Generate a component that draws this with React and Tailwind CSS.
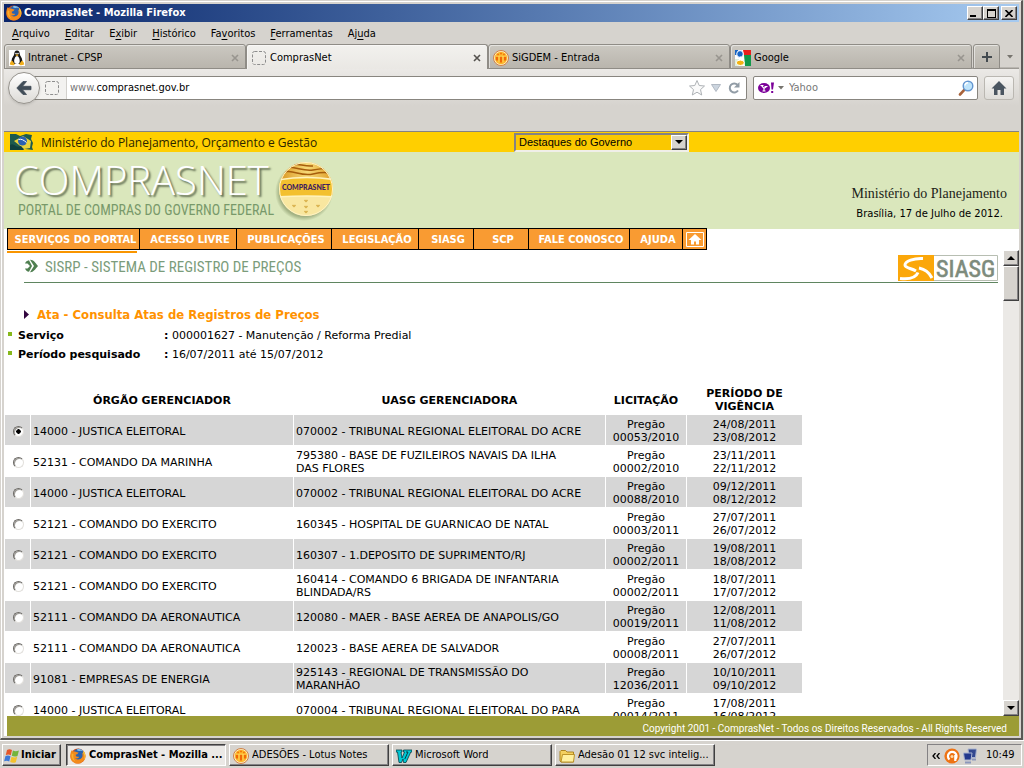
import React from "react";

const UI = "font-['DejaVu_Sans_Condensed','DejaVu_Sans',sans-serif]";
const RAISED =
  "border border-t-white border-l-white border-r-[#404040] border-b-[#404040] bg-[#d6d3ce] shadow-[inset_-1px_-1px_0_#848284]";

function FirefoxIcon() {
  return (
    <svg viewBox="0 0 16 16" className="size-4 shrink-0" aria-hidden="true">
      <circle cx="8" cy="8" r="7.6" fill="#d9541a" />
      <circle cx="8.6" cy="6.4" r="5.6" fill="#2b62ae" />
      <path d="M7 1.2c2.5-.8 5.4.3 6.6 2.3-1.6-.9-2.6-.8-3.8-.4L7.500 2.800z" fill="#7fc0ea" />
      <path d="M1.600 2.200 3.500 3.600C4.600 3.200 6 3.400 7 4.200L8.600 4.400 7.500 6l-1.800.8.300 1.500c.8.600 2.300.2 3.200.7-.6 1.500-2.800 1.700-4 1 1.600 2.300 5.300 2 6.800-.4.9-1.700.7-3.800-.2-5.100 3 1.500 3.700 5 2.200 7.600-2.600 4.400-9.400 4.700-12.500.5C-.3 9.400.2 4.900 1.600 2.200z" fill="#f28a1c" />
      <path d="M13.300 2.700c2.700 3 3 7.300.2 10.300 1.200-2.500 1.400-5.600-.5-7.700z" fill="#fcc431" />
      <path d="M1.800 5.500C1 9 2.600 12.300 5.500 13.600 3.700 11.500 2.900 8.500 3.400 6z" fill="#fbb02a" />
    </svg>
  );
}

function TuxIcon() {
  return (
    <svg viewBox="0 0 16 16" className="size-4 shrink-0 bg-white" aria-hidden="true">
      <path d="M8 .6c1.900 0 2.700 1.400 2.700 3.200 0 1.800 2.500 3.700 2.700 7.200L11 14H5L2.500 11c.2-3.500 2.800-5.300 2.800-7.200C5.300 2 6.100.6 8 .6z" fill="#161616" />
      <path d="M8 6c1.500 0 3 2.900 2.700 5.500C10.500 13.400 9.500 14 8 14s-2.700-.7-2.800-2.500C5 9 6.500 6 8 6z" fill="#fff" />
      <circle cx="7" cy="3.600" r=".8" fill="#fff" />
      <circle cx="9" cy="3.600" r=".8" fill="#fff" />
      <path d="M6.400 5 8 4.300 9.600 5 8 6.200z" fill="#f0ae1c" />
      <path d="M3 10.500 5.800 14c-.4 1.600-2.400 1.500-5 .4C1 13 1.200 12 3 10.500zM13 10.500 10.200 14c.4 1.600 2.400 1.500 5 .4C15 13 14.800 12 13 10.500z" fill="#f0ae1c" />
    </svg>
  );
}

function LotusIcon() {
  return (
    <svg viewBox="0 0 16 16" className="size-4 shrink-0" aria-hidden="true">
      <circle cx="8" cy="8" r="7.500" fill="#fff0c4" stroke="#cf8048" />
      <circle cx="8" cy="8" r="6.200" fill="#fdb62a" />
      <path d="M4 6.500v4M8 6.500v6M12 6.500v4" stroke="#f06a08" strokeWidth="2.200" />
      <path d="M6 6v6.500M10 6v6.500M2.500 6.200h11" stroke="#ffd860" strokeWidth=".8" />
      <path d="M4.300 4.500h1.500M7.200 3.500h1.600M10.200 4.500h1.500" stroke="#f06a08" strokeWidth="1.500" />
    </svg>
  );
}

function GoogleIcon() {
  return (
    <svg viewBox="0 0 16 16" className="size-4 shrink-0" aria-hidden="true">
      <path d="M0 0h16v16H0z" fill="#fff" />
      <path d="M8 0h8v5H9z" fill="#e9211d" />
      <path d="M0 0h3v5H0z" fill="#1765c5" />
      <path d="M9 5h7v11H10z" fill="#12994a" />
      <path d="M0 9h4v7H0z" fill="#dbeedd" />
      <ellipse cx="5" cy="4" rx="3.300" ry="3.400" fill="#1765c5" stroke="#fff" />
      <path d="M6 7c-1.500 1 1.500 1.500 2.500 3.500" stroke="#fff" strokeWidth="2" fill="none" />
      <ellipse cx="5.300" cy="12.800" rx="4" ry="2.700" fill="#f2b211" stroke="#fff" />
    </svg>
  );
}

function BlankIcon() {
  return (
    <svg viewBox="0 0 16 16" className="size-4 shrink-0" aria-hidden="true">
      <rect x="1.500" y="1.500" width="13" height="13" rx="2" fill="none" stroke="#8d8d8d" strokeDasharray="3 1.500" />
    </svg>
  );
}

function WordIcon() {
  return (
    <svg viewBox="0 0 16 16" className="size-4 shrink-0" aria-hidden="true">
      <path d="M0 2h6v2H5l1 6 2.500-6H7.500V2H16v2h-1.200L10 14.500H7.500L7 11l-1.500 3.500H3L1.500 4H0z" fill="#00c8d4" stroke="#053c46" strokeWidth=".8" />
      <path d="M10 4h2L8.800 11" fill="none" stroke="#053c46" />
    </svg>
  );
}

function FolderIcon() {
  return (
    <svg viewBox="0 0 16 16" className="size-4 shrink-0" aria-hidden="true">
      <path d="M1 3.500 2 2.500h4.500L8 4h6.500v10H2L1 13z" fill="#f3d060" stroke="#a87d13" strokeWidth=".9" />
      <path d="M3.500 6.500h12L14.500 14H2z" fill="#fff0a0" stroke="#b58b1e" strokeWidth=".9" />
    </svg>
  );
}

function WindowsIcon() {
  return (
    <svg viewBox="0 0 16 16" className="size-4 shrink-0" aria-hidden="true">
      <path d="M3 2c1.800-1 3.300-.9 5 .1L6.800 7.300c-1.600-1-3.200-1-5-.2z" fill="#e4572a" />
      <path d="M8.900 2.500c1.800 1 3.500 1 6 .1L13.500 8c-1.900.9-3.800.8-5.700-.2z" fill="#74b43c" />
      <path d="M1.500 8c1.800-.9 3.400-.8 5 .2l-1.300 5.200c-1.700-1-3.300-1-5.100-.1z" fill="#3d79d8" />
      <path d="M7.500 8.700c1.900 1 3.800 1 5.700.1l-1.400 5.400c-1.900.9-3.700.8-5.600-.2z" fill="#f3c22c" />
    </svg>
  );
}

const tabs = [
  { title: "Intranet - CPSP", Icon: TuxIcon },
  { title: "ComprasNet", Icon: BlankIcon, active: true },
  { title: "SiGDEM - Entrada", Icon: LotusIcon },
  { title: "Google", Icon: GoogleIcon },
];

function Tab({ title, Icon, active }) {
  return (
    <div
      className={
        "flex min-w-0 flex-[242_1_0] items-center rounded-t-[3px] border border-[#8f8c86] pt-[2px] pr-1 pl-1 shadow-[inset_1px_1px_0_#ffffff80] " +
        (active ? "border-b-0 bg-linear-to-b from-[#f2f1ee] to-[#eae8e4]" : "bg-linear-to-b from-[#cbc8c1] to-[#b9b5ad]")
      }
    >
      <button className="flex min-w-0 flex-1 items-center gap-[3px] text-left">
        <Icon />
        <span className="truncate">{title}</span>
      </button>
      <button aria-label={"Fechar " + title} className="p-[2px]">
        <svg viewBox="0 0 8 8" className="size-2">
          <path d="M1 1l6 6M7 1L1 7" stroke={active ? "#55524e" : "#98958f"} strokeWidth="1.600" />
        </svg>
      </button>
    </div>
  );
}

const menus = [
  ["", "A", "rquivo"],
  ["", "E", "ditar"],
  ["E", "x", "ibir"],
  ["", "H", "istórico"],
  ["Fa", "v", "oritos"],
  ["", "F", "erramentas"],
  ["Aj", "u", "da"],
];

function BrowserChrome() {
  return (
    <header className={UI + " text-[11px] leading-[14px] text-black"}>
      <div className="flex h-[18px] items-center bg-linear-to-r from-[#0a246a] to-[#a6caf0] pr-[2px] pl-[2px]">
        <FirefoxIcon />
        <h1 className="flex-1 truncate pl-[2px] font-bold text-white">ComprasNet - Mozilla Firefox</h1>
        <button aria-label="Minimizar" className={RAISED + " flex h-[14px] w-4 items-end justify-center pb-[2px]"}>
          <span className="mr-1 h-[2px] w-[6px] bg-black" />
        </button>
        <button aria-label="Maximizar" className={RAISED + " flex h-[14px] w-4 items-center justify-center"}>
          <span className="h-[9px] w-[9px] border border-t-2 border-black" />
        </button>
        <button aria-label="Fechar" className={RAISED + " ml-[2px] flex h-[14px] w-4 items-center justify-center"}>
          <svg viewBox="0 0 8 7" className="h-[7px] w-2">
            <path d="M.5 0l7 7M7.500 0l-7 7" stroke="#000" strokeWidth="1.600" />
          </svg>
        </button>
      </div>

      <nav className="flex h-[22px] items-center gap-[15px] pt-px pl-2">
        {menus.map(([a, b, c]) => (
          <button key={a + b + c}>
            {a}
            <span className="underline underline-offset-2">{b}</span>
            {c}
          </button>
        ))}
      </nav>

      <div className="flex h-[25px] bg-linear-to-b from-[#d6d3ce] from-90% to-[#8f8c86]">
        {tabs.map((tab) => (
          <Tab key={tab.title} {...tab} />
        ))}
        <button aria-label="Nova aba" className="ml-px flex w-[27px] items-center justify-center rounded-t-[3px] border border-[#8f8c86] bg-linear-to-b from-[#cbc8c1] to-[#b9b5ad] shadow-[inset_1px_1px_0_#ffffff80]">
          <svg viewBox="0 0 10 10" className="size-[10px]">
            <path d="M5 0v10M0 5h10" stroke="#444b50" strokeWidth="2" />
          </svg>
        </button>
        <button aria-label="Listar abas" className="flex w-[19px] items-center justify-center">
          <svg viewBox="0 0 6 4" className="h-1 w-[6px]">
            <path d="M0 0h6L3 3.500z" fill="#77746e" />
          </svg>
        </button>
      </div>

      <div className="flex h-[37px] items-center bg-linear-to-b from-[#ebe9e6] to-[#d6d3ce] pr-[5px] pl-1">
        <button aria-label="Voltar" className="z-10 flex size-8 shrink-0 items-center justify-center rounded-full border border-[#96938d] bg-linear-to-b from-white to-[#dddbd7] shadow-sm">
          <svg viewBox="0 0 16 14" className="h-[14px] w-4">
            <path d="M7 .5h3.500L6.500 5.300H15v3.400H6.500l4 4.800H7L.8 7z" fill="#414d58" stroke="#414d58" strokeLinejoin="round" strokeWidth=".8" />
          </svg>
        </button>
        <div className="-ml-2 flex h-6 flex-1 items-center rounded-[2px] border border-[#88857f] bg-white pr-1">
          <span className="flex h-full w-[34px] items-center border-r border-[#d2d0cc] bg-[#f3f2f0] pl-[11px]">
            <BlankIcon />
          </span>
          <label className="relative flex h-full flex-1 items-center">
            <input aria-label="Endereço" defaultValue="www.comprasnet.gov.br" className="absolute inset-0 w-full bg-transparent px-[3px] text-transparent outline-none" />
            <span className="pointer-events-none px-[3px] text-black">
              <span className="text-[#777]">www.</span>comprasnet.gov.br
            </span>
          </label>
          <button aria-label="Favorito">
            <svg viewBox="0 0 18 18" className="size-[18px]">
              <path d="M9 1.500l2.200 5 5.300.5-4 3.600 1.200 5.400L9 13.200 4.300 16l1.200-5.400-4-3.600 5.300-.5z" fill="#fafafa" stroke="#aeb2b6" />
            </svg>
          </button>
          <button aria-label="Histórico" className="px-[5px]">
            <svg viewBox="0 0 10 8" className="h-2 w-[10px]">
              <path d="M.5.5h9L5 7.500z" fill="#ccd5df" stroke="#b1b9c3" />
            </svg>
          </button>
          <button aria-label="Recarregar" className="px-px">
            <svg viewBox="0 0 14 14" className="size-[14px]">
              <path d="M10.500 3.800A4.500 4.500 0 1 0 11 9.500" fill="none" stroke="#919ca6" strokeWidth="2" />
              <path d="M12.500 1v5.500H7z" fill="#919ca6" />
            </svg>
          </button>
        </div>
        <div className="ml-[6px] flex h-6 w-[225px] items-center rounded-[2px] border border-[#88857f] bg-white pr-[3px] pl-1">
          <svg viewBox="0 0 16 12" className="h-3 w-4" role="img" aria-label="Yahoo">
            <ellipse cx="6" cy="6" rx="6" ry="5" fill="#7b0099" />
            <path d="M2.500 3.500h3M6.500 4.500h3M3.600 3.700 6 6.500l2.500-2M6 6.200V9M4.500 9h3" stroke="#fff" strokeWidth="1.200" fill="none" />
            <path d="M13 .5h3L15 7.500h-1.500zM13.200 9h2v2h-2z" fill="#7b0099" />
          </svg>
          <svg viewBox="0 0 6 4" className="mx-1 h-1 w-[6px]" aria-hidden="true">
            <path d="M0 0h6L3 3.500z" fill="#77746e" />
          </svg>
          <input aria-label="Pesquisar" placeholder="Yahoo" className="w-0 flex-1 pl-px outline-none placeholder:text-[#777]" />
          <button aria-label="Buscar">
            <svg viewBox="0 0 16 16" className="size-4">
              <path d="M7 9.200 2 14.500" stroke="#a8623a" strokeWidth="2.600" strokeLinecap="round" />
              <circle cx="10" cy="6" r="4.800" fill="#bfe4fb" stroke="#6395cf" strokeWidth="1.400" />
              <path d="M7 5.500a3 3 0 0 1 3-2.800" stroke="#fff" strokeWidth="1.400" fill="none" />
            </svg>
          </button>
        </div>
        <button aria-label="Página inicial" className="ml-[6px] flex h-6 w-[30px] items-center justify-center rounded-[3px] border border-[#bab7b1] bg-linear-to-b from-[#f5f4f2] to-[#dfddd9]">
          <svg viewBox="0 0 16 14" className="h-[14px] w-4">
            <path d="M8 0l7.500 7.500H13V14H9.500V9h-3v5H3V7.500H.5z" fill="#4a5560" />
          </svg>
        </button>
      </div>
      <div className="h-[25px]" />
    </header>
  );
}

const navItems = [
  ["SERVIÇOS DO PORTAL", "w-[132px]"],
  ["ACESSO LIVRE", "w-[97px]"],
  ["PUBLICAÇÕES", "w-[95px]"],
  ["LEGISLAÇÃO", "w-[87px]"],
  ["SIASG", "w-[55px]"],
  ["SCP", "w-[55px]"],
  ["FALE CONOSCO", "w-[101px]"],
  ["AJUDA", "w-[53px]"],
];

function Medal() {
  return (
    <svg viewBox="0 0 64 64" className="size-16" role="img" aria-label="Comprasnet">
      <defs>
        <linearGradient id="gold" x1="0" x2="1">
          <stop offset="0" stopColor="#d48a12" />
          <stop offset=".5" stopColor="#f7d977" />
          <stop offset="1" stopColor="#d98f14" />
        </linearGradient>
        <radialGradient id="shade">
          <stop offset=".85" stopColor="#7f8f5f" stopOpacity=".6" />
          <stop offset="1" stopColor="#7f8f5f" stopOpacity="0" />
        </radialGradient>
        <clipPath id="disc">
          <circle cx="31" cy="29" r="27" />
        </clipPath>
      </defs>
      <circle cx="29" cy="32" r="29" fill="url(#shade)" />
      <circle cx="31" cy="29" r="27" fill="#f9e7a0" />
      <g clipPath="url(#disc)">
        <path d="M0 0h64v22Q32 15 0 22z" fill="url(#gold)" />
        <path d="M6 9c12-5 20 3 32 1s14-2 20-1M4 13c14-5 20 4 34 1s14-1 22 0M12 5c10-3 16 2 26 1" fill="none" stroke="#a65e0c" strokeWidth="1.500" />
        <path d="M2 20Q32 15 62 20v17Q32 35 2 37z" fill="#f3c02f" stroke="#fff3bd" strokeWidth="1.500" />
        <path d="M29.500 40l1.500 1.500 1.500-1.500M17.500 45l1.500 1.500 1.500-1.500M29.500 46l1.500 1.500 1.500-1.500M41.500 45l1.500 1.500 1.500-1.500M29.500 51l1.500 1.500 1.500-1.500" fill="none" stroke="#d8b04c" strokeWidth="1.500" />
      </g>
      <circle cx="31" cy="29" r="26.500" fill="none" stroke="#fff3c4" />
      <text x="31" y="30" textAnchor="middle" fontFamily="Lato, sans-serif" fontWeight="900" fontSize="7" fill="#40205f">
        COMPRASNET
      </text>
    </svg>
  );
}

function SiteHeader() {
  return (
    <div>
      <div className="flex h-5 items-center bg-[#ffcf00] pl-[5px]">
        <svg viewBox="0 0 26 18" className="h-[18px] w-[26px]" role="img" aria-label="Brasil">
          <path d="M1 1h6l4 2 6-2 6 1-1 4 2 4-1 4 1 3-8-1-6 1H1z" fill="#1d5a4d" />
          <path d="M5 8 14 3l8 5-1 7-6 1z" fill="#e9d23b" />
          <circle cx="13.500" cy="8" r="4.500" fill="#2a60b2" />
          <path d="M9.500 6.500c3-.8 5 .4 8 3" stroke="#fff" fill="none" />
          <path d="M1 12c4-3 6 4 11 1l3 4H1z" fill="#10413f" />
        </svg>
        <span className="w-[479px] pt-px pl-[6px] font-['Open_Sans',sans-serif] text-xs text-[#2a2500]">
          Ministério do Planejamento, Orçamento e Gestão
        </span>
        <label className="relative flex h-[19px] w-[175px] border-2 border-t-[#848284] border-r-[#f0efe9] border-b-[#f0efe9] border-l-[#848284] bg-[#fac800]">
          <select aria-label="Destaques" className="w-full appearance-none pl-[3px] font-['Liberation_Sans',sans-serif] text-[11px] leading-[15px] text-black outline-none">
            <option>Destaques do Governo</option>
          </select>
          <span className={RAISED + " pointer-events-none absolute top-0 right-0 flex h-[15px] w-4 items-center justify-center"}>
            <svg viewBox="0 0 8 4" className="h-1 w-2">
              <path d="M0 0h8L4 4z" />
            </svg>
          </span>
        </label>
      </div>

      <div className="flex h-[77px] items-start bg-[#dae7bc]">
        <div className="w-[266px] pt-[5px] pl-[10px] whitespace-nowrap">
          <div className="font-['Open_Sans',sans-serif] text-[40px] leading-[45px] font-light text-white [text-shadow:2px_2px_2px_#5f6b50]">COMPRASNET</div>
          <div className="pl-1 font-['Roboto_Condensed','Liberation_Sans',sans-serif] text-[14px] leading-4 text-[#78996a]">
            PORTAL DE COMPRAS DO GOVERNO FEDERAL
          </div>
        </div>
        <div className="pt-[8px] pl-[5px]">
          <Medal />
        </div>
        <div className="flex-1 pt-[33px] pr-3 text-right">
          <div className="font-['Liberation_Serif',serif] text-[14px] leading-[18px] text-[#1c2418]">Ministério do Planejamento</div>
          <div className="pt-1 pr-1 font-['DejaVu_Sans',sans-serif] text-[10px] leading-[14px] text-black">Brasília, 17 de Julho de 2012.</div>
        </div>
      </div>

      <nav className={UI + " relative -mt-px ml-[3px] flex h-[22px] w-fit border border-black bg-[#f99b32] text-[11px] font-bold text-white"}>
        {navItems.map(([label, width]) => (
          <a key={label} href="#" className={width + " flex items-center justify-center border-r border-black pt-[2px] pl-1 whitespace-nowrap"}>
            {label}
          </a>
        ))}
        <a href="#" aria-label="Início" className="flex w-[23px] items-center justify-center">
          <svg viewBox="0 0 18 15" className="h-[15px] w-[18px]">
            <path d="M.5.5h17v14H.5z" fill="#f99b32" stroke="#fff" />
            <path d="M9 2l6.500 6H13v4.500h-3V9.500H8v3H5V8H2.500z" fill="#fff" />
          </svg>
        </a>
      </nav>
    </div>
  );
}

const rows = [
  ["14000 - JUSTICA ELEITORAL", "070002 - TRIBUNAL REGIONAL ELEITORAL DO ACRE", "00053/2010", "24/08/2011", "23/08/2012"],
  ["52131 - COMANDO DA MARINHA", "795380 - BASE DE FUZILEIROS NAVAIS DA ILHA\nDAS FLORES", "00002/2010", "23/11/2011", "22/11/2012"],
  ["14000 - JUSTICA ELEITORAL", "070002 - TRIBUNAL REGIONAL ELEITORAL DO ACRE", "00088/2010", "09/12/2011", "08/12/2012"],
  ["52121 - COMANDO DO EXERCITO", "160345 - HOSPITAL DE GUARNICAO DE NATAL", "00003/2011", "27/07/2011", "26/07/2012"],
  ["52121 - COMANDO DO EXERCITO", "160307 - 1.DEPOSITO DE SUPRIMENTO/RJ", "00002/2011", "19/08/2011", "18/08/2012"],
  ["52121 - COMANDO DO EXERCITO", "160414 - COMANDO 6 BRIGADA DE INFANTARIA\nBLINDADA/RS", "00002/2011", "18/07/2011", "17/07/2012"],
  ["52111 - COMANDO DA AERONAUTICA", "120080 - MAER - BASE AEREA DE ANAPOLIS/GO", "00019/2011", "12/08/2011", "11/08/2012"],
  ["52111 - COMANDO DA AERONAUTICA", "120023 - BASE AEREA DE SALVADOR", "00008/2011", "27/07/2011", "26/07/2012"],
  ["91081 - EMPRESAS DE ENERGIA", "925143 - REGIONAL DE TRANSMISSÃO DO\nMARANHÃO", "12036/2011", "10/10/2011", "09/10/2012"],
  ["14000 - JUSTICA ELEITORAL", "070004 - TRIBUNAL REGIONAL ELEITORAL DO PARA", "00014/2011", "17/08/2011", "16/08/2012"],
];

function Results() {
  return (
    <table className="w-[799px] table-fixed border-separate border-spacing-px">
      <colgroup>
        <col className="w-[25px]" />
        <col className="w-[262px]" />
        <col className="w-[311px]" />
        <col className="w-[80px]" />
        <col className="w-[115px]" />
      </colgroup>
      <thead>
        <tr className="h-[30px] *:pt-[2px]">
          <td />
          <th>ÓRGÃO GERENCIADOR</th>
          <th>UASG GERENCIADORA</th>
          <th>LICITAÇÃO</th>
          <th>
            PERÍODO DE
            <br />
            VIGÊNCIA
          </th>
        </tr>
      </thead>
      <tbody>
        {rows.map(([orgao, uasg, num, from, to], i) => (
          <tr key={i} className="h-[30px] *:pt-[2px] odd:*:bg-[#d6d6d6]">
            <td>
              <input
                type="radio"
                name="ata"
                aria-label={orgao + ", " + num}
                defaultChecked={i === 0}
                className="ml-2 block size-[11px] appearance-none rounded-full border border-t-[#6c6a66] border-r-[#e2e0dc] border-b-[#e2e0dc] border-l-[#6c6a66] bg-white shadow-[inset_1px_1px_0_#a09e99] checked:bg-[radial-gradient(circle,#000_2px,#fff_2.5px)]"
              />
            </td>
            <td className="px-[2px]">{orgao}</td>
            <td className="px-[2px] whitespace-pre-line">{uasg}</td>
            <td className="text-center">
              Pregão
              <br />
              {num}
            </td>
            <td className="text-center">
              {from}
              <br />
              {to}
            </td>
          </tr>
        ))}
      </tbody>
    </table>
  );
}

function Field({ label, children }) {
  return (
    <div className="flex h-[19px] items-center">
      <dt className="flex w-[156px] items-center gap-[6px] font-bold">
        <span className="mb-1 size-1 bg-[#86b81b]" />
        {label}
      </dt>
      <dd>
        <b>:</b> {children}
      </dd>
    </div>
  );
}

function Scrollbar() {
  return (
    <div className="flex w-4 shrink-0 flex-col bg-[#ebe9e6]">
      <button aria-label="Rolar para cima" className={RAISED + " flex h-4 items-center justify-center"}>
        <svg viewBox="0 0 8 4" className="h-1 w-2">
          <path d="M4 0l4 4H0z" />
        </svg>
      </button>
      <div className={RAISED + " h-[35px]"} />
      <div className="flex-1" />
      <button aria-label="Rolar para baixo" className={RAISED + " flex h-4 items-center justify-center"}>
        <svg viewBox="0 0 8 4" className="h-1 w-2">
          <path d="M0 0h8L4 4z" />
        </svg>
      </button>
    </div>
  );
}

function PageBody() {
  return (
    <div className="flex min-h-0 flex-1">
      <main className="min-w-0 flex-1 overflow-hidden font-['DejaVu_Sans',sans-serif] text-[11px] leading-[13px] text-black">
        <div className="mt-px ml-[3px] h-[2px] w-[130px] bg-[#f99500]" />
        <div className="mr-[5px] ml-5 flex h-[30px] items-center border-b border-[#5f8560]">
          <svg viewBox="0 0 14 14" className="mb-1 size-[14px]" aria-hidden="true">
            <path d="M1 4.500C1.700 2.600 3 1.500 5 1.200L8 7l-3 5.800C3 12.500 1.700 11.400 1 9.500h2.500L6 7 3.500 4.500z" fill="#4f7f50" />
            <path d="M6 .8C9.500.6 11 3.600 14 7c-3 3.400-4.500 6.400-8 6.200L10 7z" fill="#4f7f50" />
          </svg>
          <h2 className="flex-1 pl-[7px] font-['Roboto_Condensed','Liberation_Sans',sans-serif] text-[15px] text-[#7b9c7b]">
            SISRP - SISTEMA DE REGISTRO DE PREÇOS
          </h2>
          <svg viewBox="0 0 100 26" className="h-[26px] w-[100px]" role="img" aria-label="SIASG">
            <path d="M.5.500h99v25H.5z" fill="#fff" stroke="#b7beb2" />
            <path d="M0 0h36v26H0z" fill="#fba70a" />
            <path d="M25 3.500C16 3 7 6 7 10c0 3 6 3 11 6" fill="none" stroke="#fff" strokeWidth="3" />
            <path d="M2 23.500c9 1 16-1 18-6M21 13c5 1 10 4 13 10" fill="none" stroke="#fff" strokeWidth="3" />
            <text x="38" y="22" fontFamily="Roboto Condensed, Liberation Sans, sans-serif" fontSize="24" fill="#7d8b7c" stroke="#7d8b7c" strokeWidth=".6">
              SIASG
            </text>
          </svg>
        </div>
        <h3 className={UI + " mt-6 mb-1 flex items-center gap-2 pl-5 text-[13px] leading-[15px] font-bold text-[#ff9200]"}>
          <svg viewBox="0 0 5 9" className="h-[9px] w-[5px]" aria-hidden="true">
            <path d="M0 0l5 4.500L0 9z" fill="#33063f" />
          </svg>
          Ata - Consulta Atas de Registros de Preços
        </h3>
        <dl className="mb-[19px] pl-1">
          <Field label="Serviço">000001627 - Manutenção / Reforma Predial</Field>
          <Field label="Período pesquisado">16/07/2011 até 15/07/2012</Field>
        </dl>
        <Results />
      </main>
      <Scrollbar />
    </div>
  );
}

const tasks = [
  { title: "ComprasNet - Mozilla ...", Icon: FirefoxIcon, active: true },
  { title: "ADESÕES - Lotus Notes", Icon: LotusIcon },
  { title: "Microsoft Word", Icon: WordIcon },
  { title: "Adesão 01 12 svc intelig...", Icon: FolderIcon },
];

function Taskbar() {
  return (
    <footer className={UI + " flex h-7 shrink-0 items-center border-t border-white bg-[#d6d3ce] px-[2px] pt-px text-[11px] text-black"}>
      <button className={RAISED + " mr-[5px] flex h-[22px] w-[59px] items-center gap-px pt-px pl-px font-bold"}>
        <WindowsIcon />
        Iniciar
      </button>
      <div className="flex min-w-0 flex-1 gap-[3px]">
        {tasks.map(({ title, Icon, active }) => (
          <button
            key={title}
            className={
              "flex h-[22px] w-40 min-w-0 items-center gap-[3px] pt-px pl-[3px] " +
              (active
                ? "border border-t-[#404040] border-r-white border-b-white border-l-[#404040] bg-[#ebe9e6] font-bold shadow-[inset_1px_1px_0_#848284]"
                : RAISED)
            }
          >
            <Icon />
            <span className="truncate">{title}</span>
          </button>
        ))}
      </div>
      <div className="flex h-[22px] w-[95px] items-center border border-t-[#848284] border-r-white border-b-white border-l-[#848284] pt-px pl-1">
        <svg viewBox="0 0 8 6" className="h-[6px] w-2" aria-hidden="true">
          <path d="M3.500 0 1 3l2.500 3M7.500 0 5 3l2.500 3" fill="none" stroke="#000" strokeWidth="1.300" />
        </svg>
        <svg viewBox="0 0 16 16" className="ml-1 size-4" aria-hidden="true">
          <circle cx="8" cy="8" r="7.600" fill="#ee7314" />
          <path d="M5.500 11.500A4.300 4.300 0 1 1 11.500 11M11.300 7v6" fill="none" stroke="#fff" strokeWidth="2.200" />
          <circle cx="8" cy="8.500" r="1.500" fill="#ffdba8" />
        </svg>
        <svg viewBox="0 0 16 16" className="ml-[2px] size-4" aria-hidden="true">
          <path d="M6 1h8.500l-1 8.500H7z" fill="#33488f" stroke="#a9b3d0" />
          <path d="M1.500 5h8.500L9 12H2.500z" fill="#24398c" stroke="#a9b3d0" />
          <path d="M3 14.500h6M10 11.500h4" stroke="#8b97bb" strokeWidth="2" />
        </svg>
        <span className="pl-2">10:49</span>
      </div>
    </footer>
  );
}

export default function App() {
  return (
    <div className="flex h-screen flex-col bg-[#d6d3ce]">
      <div className="mr-px flex min-h-0 flex-1 flex-col border-t border-r-2 border-b-2 border-l border-t-[#d6d3ce] border-r-[#5a5855] border-b-[#5a5855] border-l-[#d6d3ce]">
        <div className="flex min-h-0 flex-1 flex-col border-t border-l border-white pt-[2px] pr-[2px] pb-[2px] pl-[2px]">
          <BrowserChrome />
          <div className="flex min-h-0 flex-1 flex-col border-t border-[#848284] bg-white">
            <SiteHeader />
            <PageBody />
            <div className="ml-[3px] flex h-5 shrink-0 items-center justify-end bg-[#9c9c36] pt-[5px] pr-3 font-['Roboto',sans-serif] text-[10px] text-white">
              Copyright 2001 - ComprasNet - Todos os Direitos Reservados - All Rights Reserved
            </div>
          </div>
        </div>
      </div>
      <Taskbar />
    </div>
  );
}
